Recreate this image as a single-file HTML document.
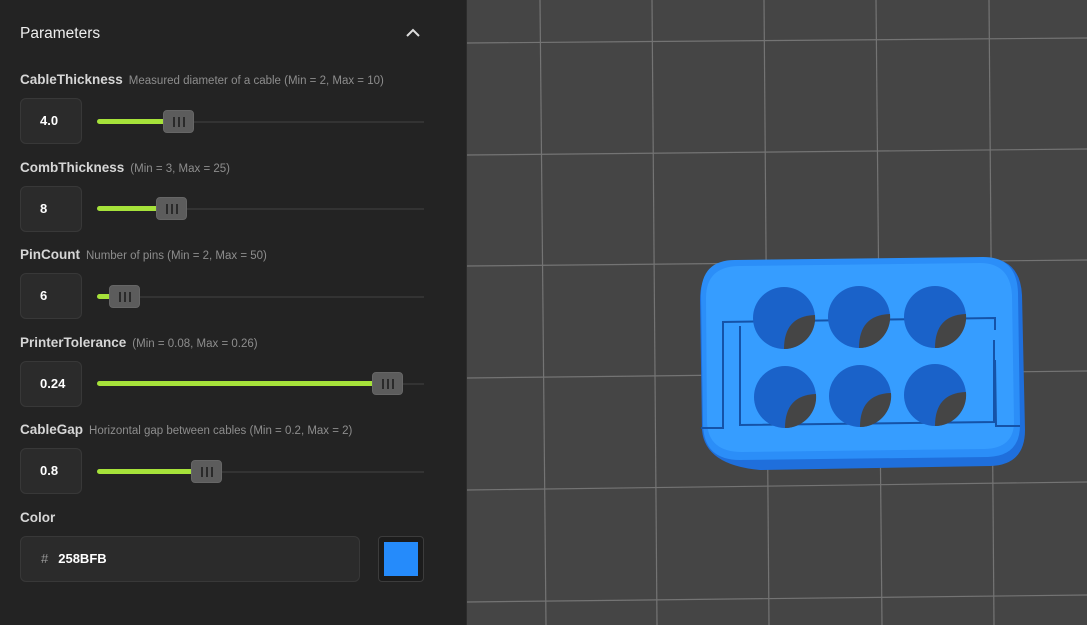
<!DOCTYPE html>
<html><head><style>
*{box-sizing:border-box;margin:0;padding:0}
body{width:1087px;height:625px;overflow:hidden;background:#454545;font-family:"Liberation Sans",sans-serif;position:relative}
#panel{position:absolute;left:0;top:0;width:467px;height:625px;background:#232323;border-right:1px solid #2c2c2c}
.t{position:absolute;color:#e8e8e8}
.lab{position:absolute;left:20px;font-size:13.5px;font-weight:bold;color:#d6d6d6}
.lab span{font-weight:normal;font-size:11.5px;color:#8d8d8d;margin-left:6px}
.box{position:absolute;left:20px;width:62px;height:46px;background:#2b2b2b;border:1px solid #383838;border-radius:6px;color:#fff;font-weight:bold;font-size:13px;line-height:44px;padding-left:19px}
.track{position:absolute;left:97px;width:327px;height:2px;background:#333}
.fill{position:absolute;left:97px;height:5px;background:#a6e23a;border-radius:3px}
.th{position:absolute;width:31px;height:23px;background:#5c5c5c;border-radius:4px;border:1px solid #666}
.th::after{content:"";position:absolute;left:9px;top:6px;width:2px;height:10px;background:#2a2a2a;box-shadow:5px 0 #2a2a2a,10px 0 #2a2a2a}
</style></head><body>
<svg width="620" height="625" style="position:absolute;left:467px;top:0" stroke="#747474" stroke-width="1.2">
<line x1="73" y1="0" x2="79" y2="625"/><line x1="185" y1="0" x2="190" y2="625"/><line x1="297" y1="0" x2="302" y2="625"/><line x1="409" y1="0" x2="415" y2="625"/><line x1="522" y1="0" x2="527" y2="625"/>
<line x1="0" y1="43" x2="620" y2="38"/><line x1="0" y1="155" x2="620" y2="149"/><line x1="0" y1="266" x2="620" y2="260"/><line x1="0" y1="378" x2="620" y2="371"/><line x1="0" y1="490" x2="620" y2="482"/><line x1="0" y1="602" x2="620" y2="595"/>
</svg>
<svg width="1087" height="625" style="position:absolute;left:0;top:0">
<path d="M735 262 L985 258 Q1020 258 1022 295 L1025 430 Q1025 465 990 466 L760 470 Q705 465 702 430 L700 300 Q700 262 735 262Z" fill="#1f6fdc"/>
<path d="M735 260 L983 257 Q1017 257 1018 293 L1020 425 Q1020 456 988 457 L740 460 Q704 460 703 425 L701 295 Q701 260 735 260Z" fill="#2b8ef8"/>
<path d="M740 266 L980 263 Q1010 263 1012 295 L1014 422 Q1014 448 985 449 L742 452 Q708 452 707 422 L706 298 Q706 266 740 266Z" fill="#369dff"/>
<g fill="none" stroke="#1553a8" stroke-width="2">
<path d="M701 428 L723 428 L723 322 L995 318 L995 330 M995 360 L996 426 L1020 426"/>
<path d="M740 326 L740 425 L994 422 L994 340"/>
</g>
<g fill="#1a62c9">
<circle cx="784" cy="318" r="31"/><circle cx="859" cy="317" r="31"/><circle cx="935" cy="317" r="31"/>
<circle cx="785" cy="397" r="31"/><circle cx="860" cy="396" r="31"/><circle cx="935" cy="395" r="31"/>
</g>
<g fill="#454545">
<path d="M784 349 Q784 316 815 315 A31 31 0 0 1 784 349Z"/>
<path d="M859 348 Q859 315 890 314 A31 31 0 0 1 859 348Z"/>
<path d="M935 348 Q935 315 966 314 A31 31 0 0 1 935 348Z"/>
<path d="M785 428 Q785 395 816 394 A31 31 0 0 1 785 428Z"/>
<path d="M860 427 Q860 394 891 393 A31 31 0 0 1 860 427Z"/>
<path d="M935 426 Q935 393 966 392 A31 31 0 0 1 935 426Z"/>
</g>
</svg>
<div id="panel">
<div class="t" style="left:20px;top:25px;font-size:15.5px;color:#eee">Parameters</div>
<svg style="position:absolute;left:405px;top:28px" width="16" height="10"><path d="M2 8 L8 2 L14 8" stroke="#ddd" stroke-width="2" fill="none"/></svg>

<div class="lab" style="top:72px">CableThickness<span>Measured diameter of a cable (Min = 2, Max = 10)</span></div>
<div class="box" style="top:98px">4.0</div>
<div class="track" style="top:121px"></div><div class="fill" style="top:119px;width:70px"></div><div class="th" style="left:163px;top:110px"></div>

<div class="lab" style="top:160px">CombThickness<span>(Min = 3, Max = 25)</span></div>
<div class="box" style="top:186px">8</div>
<div class="track" style="top:208px"></div><div class="fill" style="top:206px;width:63px"></div><div class="th" style="left:156px;top:197px"></div>

<div class="lab" style="top:247px">PinCount<span>Number of pins (Min = 2, Max = 50)</span></div>
<div class="box" style="top:273px">6</div>
<div class="track" style="top:296px"></div><div class="fill" style="top:294px;width:16px"></div><div class="th" style="left:109px;top:285px"></div>

<div class="lab" style="top:335px">PrinterTolerance<span>(Min = 0.08, Max = 0.26)</span></div>
<div class="box" style="top:361px">0.24</div>
<div class="track" style="top:383px"></div><div class="fill" style="top:381px;width:279px"></div><div class="th" style="left:372px;top:372px"></div>

<div class="lab" style="top:422px">CableGap<span>Horizontal gap between cables (Min = 0.2, Max = 2)</span></div>
<div class="box" style="top:448px">0.8</div>
<div class="track" style="top:471px"></div><div class="fill" style="top:469px;width:98px"></div><div class="th" style="left:191px;top:460px"></div>

<div class="lab" style="top:510px">Color</div>
<div class="box" style="top:536px;width:340px;padding-left:20px"><span style="color:#999;font-weight:normal;margin-right:10px">#</span>258BFB</div>
<div style="position:absolute;left:378px;top:536px;width:46px;height:46px;background:#1c1c1c;border:1px solid #3c3c3c;border-radius:4px;padding:5px"><div style="width:100%;height:100%;background:#258bfb"></div></div>
</div>
</body></html>
